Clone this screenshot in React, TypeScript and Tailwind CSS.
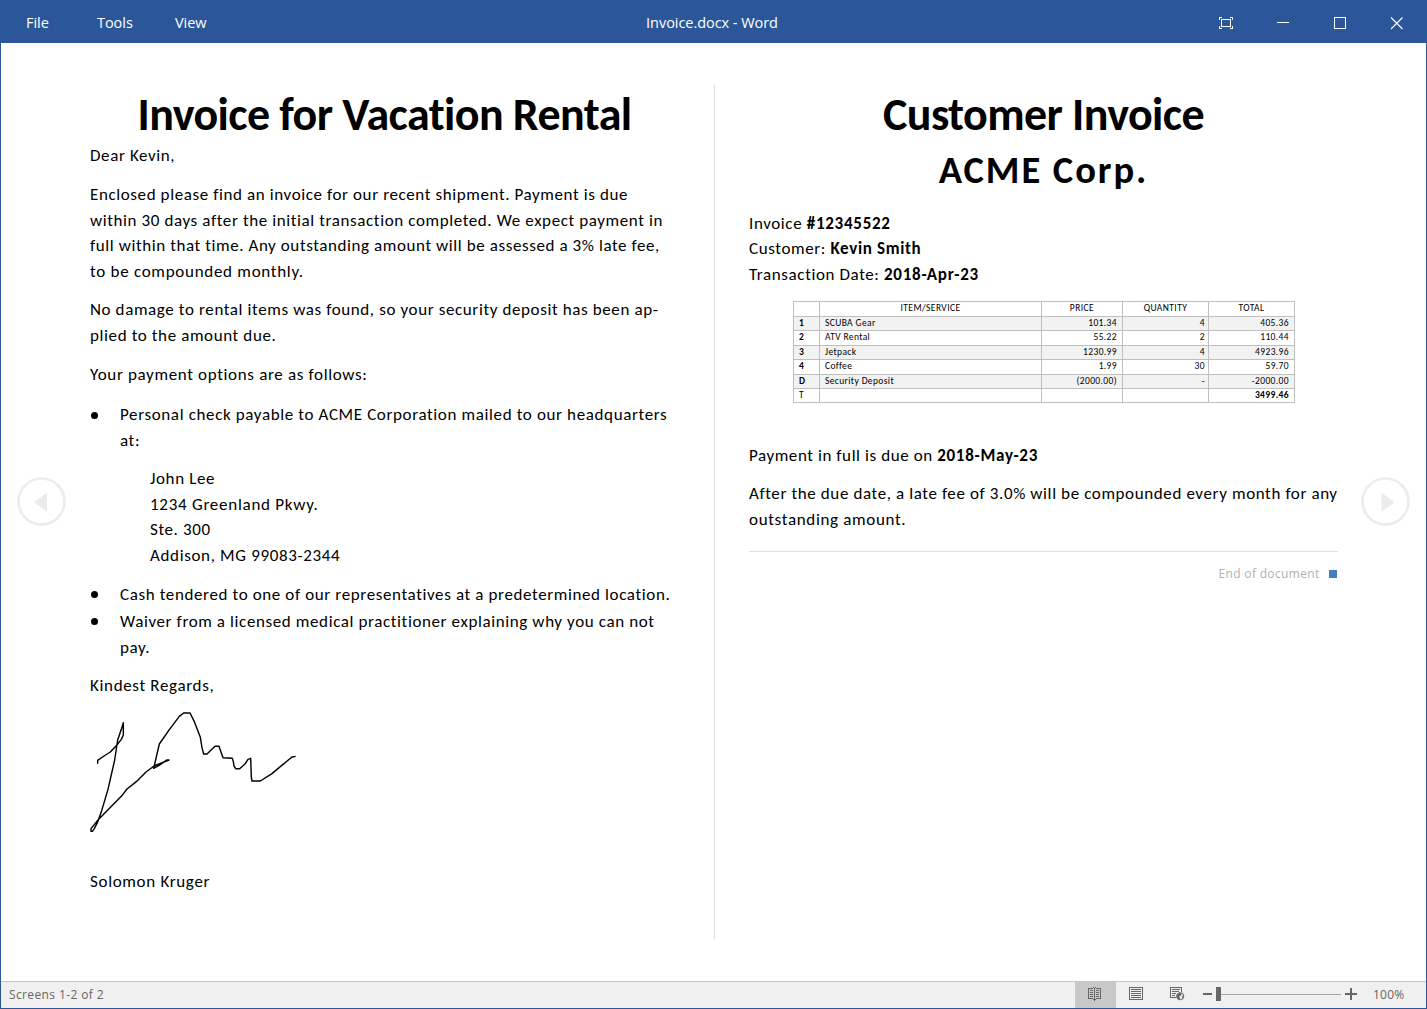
import type { ReactNode } from 'react';

const items = [
  ['1', 'SCUBA Gear', '101.34', '4', '405.36'],
  ['2', 'ATV Rental', '55.22', '2', '110.44'],
  ['3', 'Jetpack', '1230.99', '4', '4923.96'],
  ['4', 'Coffee', '1.99', '30', '59.70'],
  ['D', 'Security Deposit', '(2000.00)', '-', '-2000.00'],
  ['T', '', '', '', '3499.46'],
];

const rowHeights = ['h-[14px]', 'h-[15px]', 'h-[14px]', 'h-[15px]', 'h-[14px]', 'h-[14px]'];

function TitleBar() {
  return (
    <header className="flex h-[43px] shrink-0 items-center justify-between bg-[#2b579a] pb-px font-['Open_Sans',sans-serif] text-[14.5px] text-white">
      <nav className="flex w-[420px] tracking-[-0.05px]">
        <span className="ml-[26px] w-[71px] pt-1">File</span>
        <span className="w-[78px] pt-1">Tools</span>
        <span className="pt-1">View</span>
      </nav>
      <div className="mr-[3px] pt-1 tracking-[-0.05px]">Invoice.docx - Word</div>
      <div className="flex w-[420px] items-center justify-end gap-[42px] pt-[5px] pr-[23px]">
        <svg width="15" height="13" viewBox="0 0 15 13" fill="none" stroke="white" shapeRendering="crispEdges">
          <path d="M1.500 3V.5H4M12 .5h2.500V3M14.500 9v2.500H12M4 11.500H1.500V9M3.500 2.500h9v7h-9z" />
        </svg>
        <svg width="15" height="13" viewBox="0 0 15 13" fill="none" stroke="white" shapeRendering="crispEdges">
          <path d="M2 5.500h12" />
        </svg>
        <svg width="15" height="13" viewBox="0 0 15 13" fill="none" stroke="white" shapeRendering="crispEdges">
          <path d="M2.500.5h11v11h-11z" />
        </svg>
        <svg width="15" height="13" viewBox="0 0 15 13" fill="none" stroke="white" strokeWidth="1.100">
          <path d="M2 .5l11.500 11.500M13.500.5L2 12" />
        </svg>
      </div>
    </header>
  );
}

function PageArrow({ direction }: { direction: 'left' | 'right' }) {
  return (
    <button className="mt-[434px] size-[49px] shrink-0" aria-label={direction === 'left' ? 'Previous' : 'Next'}>
      <svg width="49" height="49" viewBox="0 0 49 49">
        <circle cx="24.500" cy="24.500" r="23" fill="none" stroke="#ececec" strokeWidth="2.600" />
        <path d={direction === 'left' ? 'M30 15.500v19.500L17 25.200z' : 'M20.500 15.500v19.500L33.500 25.200z'} fill="#ebebeb" />
      </svg>
    </button>
  );
}

function Bullet({ children }: { children: ReactNode }) {
  return (
    <li className="flex">
      <span className="mt-[9.300px] ml-[0.500px] mr-[22.500px] size-[7px] shrink-0 rounded-full bg-black" />
      <div className="whitespace-nowrap">{children}</div>
    </li>
  );
}

function Letter() {
  return (
    <article className="w-[589px] shrink-0 pt-[43px] whitespace-nowrap">
      <h1 className="text-center text-[46px] leading-[56px] font-bold tracking-[-0.580px]">Invoice for Vacation Rental</h1>
      <p className="mt-[0.600px]">Dear Kevin,</p>
      <p className="mt-[13.900px] tracking-[0.605px]">
        Enclosed please find an invoice for our recent shipment. Payment is due
        <br />
        within 30 days after the initial transaction completed. We expect payment in
        <br />
        <span className="tracking-[0.585px]">full within that time. Any outstanding amount will be assessed a 3% late fee,</span>
        <br />
        <span className="tracking-[0.720px]">to be compounded monthly.</span>
      </p>
      <p className="mt-[12.900px]">
        No damage to rental items was found, so your security deposit has been ap-
        <br />
        plied to the amount due.
      </p>
      <p className="mt-[13.600px] tracking-[0.660px]">Your payment options are as follows:</p>
      <ul className="mt-[14.600px]">
        <Bullet>
          <span className="tracking-[0.632px]">Personal check payable to ACME Corporation mailed to our headquarters</span>
          <br />
          at:
        </Bullet>
      </ul>
      <address className="mt-[12.800px] ml-[60px] not-italic">
        John Lee
        <br />
        <span className="tracking-[0.730px]">1234 Greenland Pkwy.</span>
        <br />
        Ste. 300
        <br />
        <span className="tracking-[0.650px]">Addison, MG 99083-2344</span>
      </address>
      <ul className="mt-[13.400px] flex flex-col gap-[1.400px]">
        <Bullet>
          <span className="tracking-[0.618px]">Cash tendered to one of our representatives at a predetermined location.</span>
        </Bullet>
        <Bullet>
          Waiver from a licensed medical practitioner explaining why you can not
          <br />
          pay.
        </Bullet>
      </ul>
      <p className="mt-[12.800px] tracking-[0.660px]">Kindest Regards,</p>
      <svg className="mt-[11.200px] block" width="210" height="124" viewBox="30 30 630 372" fill="none" stroke="black" strokeWidth="4.300" strokeLinejoin="round">
        <path d="M53 191V181L72 168L91 156L110 136L124 118L130 105V68L124 88L113 120L104 180L84 268L65 332L52 368L43 386L37 394H33V386L54 360L87 326L124 289L141 267L169 245L198 216L222 198L267 180H260L236 197L221 205L238 132L268 89L298 49L311 39H330L343 65L361 112L366 143L371 162H381L405 139H417L429 173L457 175L460 185L462 198L467 206H479L495 192L504 178L512 175L514 232L516 243H541L576 221L608 194L636 171L647 169" />
      </svg>
      <p className="mt-[35px] tracking-[0.680px]">Solomon Kruger</p>
    </article>
  );
}

function InvoiceTable() {
  const cell = 'border border-[#bfbfbf] px-[5px] py-0';
  return (
    <table className="mt-[13.500px] ml-11 w-[502px] table-fixed border-collapse text-[9.500px] leading-[11px] tracking-[0.380px]">
      <colgroup>
        <col className="w-[26px]" />
        <col className="w-[222px]" />
        <col className="w-[81px]" />
        <col className="w-[86px]" />
        <col className="w-[86px]" />
      </colgroup>
      <thead>
        <tr className="h-[15px]">
          {['', 'ITEM/SERVICE', 'PRICE', 'QUANTITY', 'TOTAL'].map((label) => (
            <th key={label} className={`${cell} text-center font-normal tracking-[0.420px]`}>{label}</th>
          ))}
        </tr>
      </thead>
      <tbody>
        {items.map(([id, name, price, quantity, total], row) => (
          <tr key={id} className={row % 2 === 0 ? `${rowHeights[row]} bg-[#f2f2f2]` : rowHeights[row]}>
            <td className={id === 'T' ? cell : `${cell} font-bold`}>{id}</td>
            <td className={cell}>{name}</td>
            <td className={`${cell} text-right`}>{price}</td>
            <td className={`${cell} pr-[3px] text-right`}>{quantity}</td>
            <td className={id === 'T' ? `${cell} text-right font-bold` : `${cell} text-right`}>{total}</td>
          </tr>
        ))}
      </tbody>
    </table>
  );
}

function Invoice() {
  return (
    <article className="w-[589px] shrink-0 pt-[43px] whitespace-nowrap">
      <h1 className="text-center text-[46px] leading-[56px] font-bold tracking-[-0.600px]">Customer Invoice</h1>
      <h2 className="mt-[5px] text-center text-[38.500px] leading-[46px] font-bold tracking-[1.950px]">ACME Corp.</h2>
      <p className="mt-[17.700px]">
        Invoice <b className="tracking-[0.730px]">#12345522</b>
        <br />
        Customer: <b className="tracking-[0.660px]">Kevin Smith</b>
        <br />
        Transaction Date: <b className="tracking-[0.740px]">2018-Apr-23</b>
      </p>
      <InvoiceTable />
      <p className="mt-[40px]">
        <span className="tracking-[0.580px]">Payment in full is due on </span>
        <b className="tracking-[0.740px]">2018-May-23</b>
      </p>
      <p className="mt-[12.900px]">
        After the due date, a late fee of 3.0% will be compounded every month for any
        <br />
        <span className="tracking-[0.670px]">outstanding amount.</span>
      </p>
      <div className="mt-[18px] flex items-center justify-end gap-[9.500px] border-t border-[#dfdfdf] pt-[13px] font-['Open_Sans',sans-serif] text-xs leading-[18px] tracking-[0.330px] text-[#b1b1b1]">
        End of document
        <span className="mr-px size-2 bg-[#4a7ebb]" />
      </div>
    </article>
  );
}

function StatusBar() {
  return (
    <footer className="flex h-[27px] shrink-0 items-center border-t border-[#c6c6c6] bg-[#f0f0f0] font-['Open_Sans',sans-serif] text-xs text-[#666]">
      <span className="ml-2 flex-1 tracking-[0.380px]">Screens 1-2 of 2</span>
      <div className="flex h-full w-[41px] items-center justify-center bg-[#c8c8c8] pr-[2px] pb-[3px]">
        <svg width="13" height="14" viewBox="0 0 13 14" fill="none" stroke="#666" shapeRendering="crispEdges">
          <path d="M5 1.500H.5v10H5M8 1.500h4.500v10H8M6.500 1v13M5 .5h1M7 .5h1M5 12.500h3M2 3.500h3M2 5.500h3M2 7.500h3M2 9.500h3M8 3.500h3M8 5.500h3M8 7.500h3M8 9.500h3" />
        </svg>
      </div>
      <svg className="mb-[3px] ml-[13px]" width="14" height="13" viewBox="0 0 14 13" fill="none" stroke="#666" shapeRendering="crispEdges">
        <path d="M.5.5h13v12H.5zM2 2.500h10M2 4.500h10M2 6.500h10M2 8.500h10M2 10.500h10" />
      </svg>
      <svg className="mb-[2px] ml-[27px]" width="15" height="14" viewBox="0 0 15 14" fill="none" stroke="#666">
        <path d="M6 10.500H.5V.5h11V5M2 2.500h8M2 4.500h7M2 6.500h4M2 8.500h3" shapeRendering="crispEdges" />
        <circle cx="10.200" cy="9.200" r="3.600" fill="#f0f0f0" />
        <path d="M6.800 8l3-2.300 2 1-1.200 2.300H9.200l1 2.700-1.600.8-1.800-2.200zM12 8.700l1.700.5-1.700 2.600z" fill="#666" stroke="none" />
      </svg>
      <span className="mb-[2px] ml-[18px] h-[2px] w-[9px] bg-[#666]" />
      <span className="mb-[2px] ml-1 h-[14px] w-[5px] bg-[#666]" />
      <span className="mb-[2px] h-px w-[120px] bg-[#a6a6a6]" />
      <svg className="mb-[2px] ml-1" width="12" height="12" viewBox="0 0 12 12" stroke="#666" strokeWidth="2">
        <path d="M0 6h12M6 0v12" />
      </svg>
      <span className="ml-4 w-[53px] tracking-[0.250px]">100%</span>
    </footer>
  );
}

export default function App() {
  return (
    <div className="flex h-[1009px] w-[1427px] flex-col overflow-hidden bg-[#2b579a]">
      <TitleBar />
      <main className="mx-px flex flex-1 bg-white pl-4 font-['Carlito','Calibri','Lato',sans-serif] text-[17px] leading-[25.600px] tracking-[0.610px] text-black">
        <PageArrow direction="left" />
        <div className="w-6 shrink-0" />
        <Letter />
        <div className="mt-[42px] mr-[34px] ml-[35px] h-[854px] w-px shrink-0 bg-[#dcdcdc]" />
        <Invoice />
        <div className="w-[23px] shrink-0" />
        <PageArrow direction="right" />
      </main>
      <div className="mx-px mb-px">
        <StatusBar />
      </div>
    </div>
  );
}
